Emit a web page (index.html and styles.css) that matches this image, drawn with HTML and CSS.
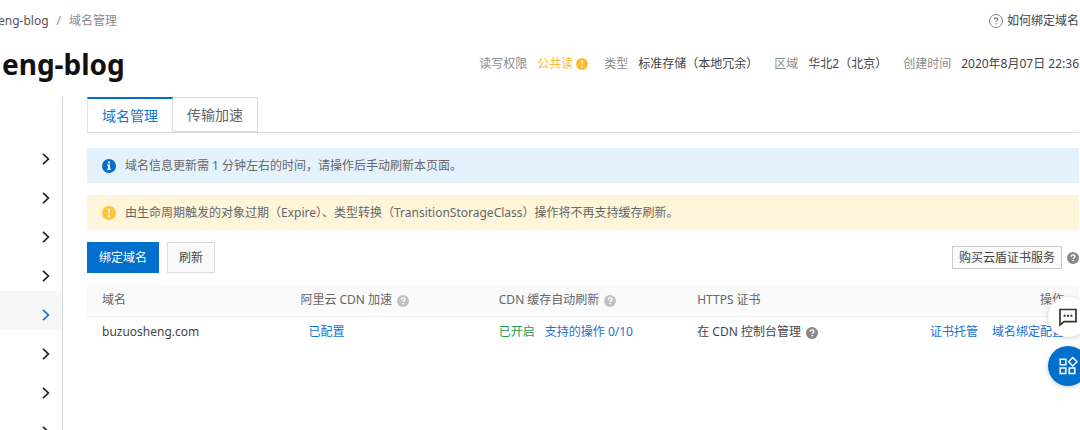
FILE: index.html
```html
<!DOCTYPE html>
<html lang="zh-CN">
<head>
<meta charset="utf-8">
<meta name="viewport" content="width=device-width, initial-scale=1">
<title>域名管理</title>
<link rel="stylesheet" href="styles.css">
</head>
<body>
<svg class="sprite" aria-hidden="true">
  <symbol id="chevron" viewBox="0 0 8 12"><path d="M1 .8 6.4 6 1 11.2" fill="none" stroke="currentColor" stroke-width="1.7"/></symbol>
  <symbol id="help" viewBox="0 0 14 14"><circle cx="7" cy="7" r="7" fill="currentColor"/><path d="M4.9 5.5c0-1.3.9-2.1 2.1-2.1s2.2.8 2.2 1.9c0 1.4-2 1.5-2 3" fill="none" stroke="#fff" stroke-width="1.6"/><path d="M6.3 9.3h1.7v1.6H6.3z" fill="#fff"/></symbol>
  <symbol id="help-line" viewBox="0 0 14 14"><circle cx="7" cy="7" r="6.5" fill="none" stroke="currentColor" stroke-width=".9"/><path d="M5.3 5.6c0-1.1.7-1.7 1.7-1.7s1.8.6 1.8 1.5c0 1.2-1.7 1.3-1.7 2.7" fill="none" stroke="currentColor" stroke-width="1.1"/><path d="M6.5 9.2h1.2v1.2H6.5z" fill="currentColor"/></symbol>
  <symbol id="warn" viewBox="0 0 14 14"><circle cx="7" cy="7" r="7" fill="currentColor"/><path d="M6.1 2.8h1.8l-.3 5.4H6.4zM6.1 9.3h1.8v1.8H6.1z" fill="#fff"/></symbol>
  <symbol id="info" viewBox="0 0 14 14"><circle cx="7" cy="7" r="7" fill="currentColor"/><path d="M6 2.6h2v1.8H6zM5 5.5h3v4.2h1v1.3H5V9.7h1V6.8H5z" fill="#fff"/></symbol>
</svg>

<header class="header">
  <div class="header-row">
    <nav class="breadcrumb" aria-label="breadcrumb">
      <a class="crumb" href="#">eng-blog</a>
      <span class="slash">/</span>
      <span class="crumb-current">域名管理</span>
    </nav>
    <a class="help-link" href="#"><svg class="icon"><use href="#help-line"/></svg>如何绑定域名</a>
  </div>
  <div class="title-row">
    <h1 class="title">eng-blog</h1>
    <dl class="meta">
      <div class="meta-item"><dt>读写权限</dt><dd class="orange">公共读<svg class="icon-small"><use href="#warn"/></svg></dd></div>
      <div class="meta-item"><dt>类型</dt><dd>标准存储（本地冗余）</dd></div>
      <div class="meta-item"><dt>区域</dt><dd>华北2（北京）</dd></div>
      <div class="meta-item"><dt>创建时间</dt><dd>2020年8月07日 22:36</dd></div>
    </dl>
  </div>
</header>

<div class="body">
  <nav class="sidebar" aria-label="menu">
    <a class="side-item" href="#" aria-label="展开"><svg class="chevron"><use href="#chevron"/></svg></a>
    <a class="side-item" href="#" aria-label="展开"><svg class="chevron"><use href="#chevron"/></svg></a>
    <a class="side-item" href="#" aria-label="展开"><svg class="chevron"><use href="#chevron"/></svg></a>
    <a class="side-item" href="#" aria-label="展开"><svg class="chevron"><use href="#chevron"/></svg></a>
    <a class="side-item active" href="#" aria-label="展开"><svg class="chevron"><use href="#chevron"/></svg></a>
    <a class="side-item" href="#" aria-label="展开"><svg class="chevron"><use href="#chevron"/></svg></a>
    <a class="side-item" href="#" aria-label="展开"><svg class="chevron"><use href="#chevron"/></svg></a>
    <a class="side-item" href="#" aria-label="展开"><svg class="chevron"><use href="#chevron"/></svg></a>
  </nav>

  <main class="main">
    <div class="tabs" role="tablist">
      <button class="tab selected" role="tab" aria-selected="true">域名管理</button>
      <button class="tab" role="tab" aria-selected="false">传输加速</button>
    </div>

    <div class="alert alert-info"><svg class="icon"><use href="#info"/></svg><span>域名信息更新需 1 分钟左右的时间，请操作后手动刷新本页面。</span></div>
    <div class="alert alert-warn"><svg class="icon"><use href="#warn"/></svg><span>由生命周期触发的对象过期（Expire）、类型转换（TransitionStorageClass）操作将不再支持缓存刷新。</span></div>

    <div class="toolbar">
      <button class="btn primary">绑定域名</button>
      <button class="btn">刷新</button>
      <div class="toolbar-end">
        <button class="btn compact">购买云盾证书服务</button>
        <svg class="icon-small dark"><use href="#help"/></svg>
      </div>
    </div>

    <table class="table">
      <thead>
        <tr>
          <th>域名</th>
          <th>阿里云 CDN 加速<svg class="icon-small light"><use href="#help"/></svg></th>
          <th>CDN 缓存自动刷新<svg class="icon-small light"><use href="#help"/></svg></th>
          <th>HTTPS 证书</th>
          <th class="end">操作</th>
        </tr>
      </thead>
      <tbody>
        <tr>
          <td>buzuosheng.com</td>
          <td><a class="link indent" href="#">已配置</a></td>
          <td><span class="on">已开启</span><a class="link" href="#">支持的操作 0/10</a></td>
          <td>在 CDN 控制台管理<svg class="icon-small dark"><use href="#help"/></svg></td>
          <td class="end"><a class="link" href="#">证书托管</a><a class="link next" href="#">域名绑定配置</a></td>
        </tr>
      </tbody>
    </table>
  </main>
</div>

<div class="floating">
  <button class="fab" aria-label="反馈">
    <svg viewBox="0 0 20 20" width="20" height="20"><path d="M2 2.5h16v12.2H6.2L2 18z" fill="none" stroke="#333" stroke-width="1.7"/><path d="M5.6 7.8h2v2h-2zM9 7.8h2v2H9zM12.4 7.8h2v2h-2z" fill="#333"/></svg>
  </button>
  <button class="fab blue" aria-label="应用">
    <svg viewBox="0 0 20 20" width="20" height="20"><path d="M2.2 3.2h5.6v5.6H2.2zM2.2 12h5.6v5.4H2.2zM11.2 12h5.6v5.4h-5.6zM14.8 1.5l4.2 4.3-4.2 4.2-4.2-4.2z" fill="none" stroke="#fff" stroke-width="1.5"/></svg>
  </button>
</div>
</body>
</html>
```
FILE: styles.css
```css
* { box-sizing: border-box; }

body {
  margin: 0;
  min-height: 100vh;
  display: flex;
  flex-direction: column;
  overflow: hidden;
  background: #fff;
  color: #444;
  font: 12px/18px "Noto Sans", "Noto Sans CJK SC", sans-serif;
}

a { color: inherit; text-decoration: none; }
button { font: inherit; color: inherit; cursor: pointer; }
.sprite { display: none; }

.icon { width: 14px; height: 14px; flex: none; }
.icon-small { width: 12px; height: 12px; flex: none; margin-left: 5px; vertical-align: -3px; }
.light { color: #c1c1c1; }
.dark { color: #888; }

.header { padding: 12px 1px 0 0; }
.header-row, .title-row { display: flex; justify-content: space-between; align-items: center; }
.breadcrumb { display: flex; gap: 8px; }
.crumb { margin-left: -2px; color: #555; }
.slash, .crumb-current { color: #8c8c8c; }
.help-link { display: flex; align-items: center; gap: 4px; }
.help-link .icon { color: #777; }

.title-row { height: 67px; }
.title { margin: 0 0 0 2px; color: #111; font-size: 28px; line-height: 40px; font-weight: 700; }
.meta { display: flex; gap: 16px; margin: 0; }
.meta-item { display: flex; gap: 10px; }
.meta dt { color: #8c8c8c; }
.meta dd { display: flex; align-items: center; margin: 0; }
.meta .orange { color: #ffb92e; }
.meta .icon-small { margin-left: 3px; }

.body { flex: 1; display: flex; }
.sidebar {
  flex: 0 0 63px;
  height: calc(100vh - 97px);
  padding-top: 38px;
  border-right: 1px solid #d6d6d6;
  overflow: hidden;
}
.side-item { display: flex; justify-content: flex-end; height: 39px; padding: 18px 12px 0 0; color: #222; }
.chevron { width: 8px; height: 12px; }
.side-item.active { background: #f7f7f7; color: #1473d2; }

.main { flex: 1; min-width: 0; padding: 0 1px 0 24px; }

.tabs { display: flex; height: 36px; border-bottom: 1px solid #d9d9d9; }
.tab {
  height: 35px;
  padding: 0 14px;
  border: 1px solid #dcdcdc;
  border-left: 0;
  background: #fff;
  color: #666;
  font-size: 14px;
}
.tab.selected { border-top: 2px solid #0070cc; border-left: 1px solid #e5e5e5; border-bottom: 0; color: #1473d2; }

.alert { display: flex; align-items: center; gap: 9px; min-height: 35px; padding: 5px 15px 4px; color: #666; }
.alert-info { margin-top: 15px; background: #e4f2fe; }
.alert-info .icon { color: #0070cc; }
.alert-warn { margin-top: 12px; background: #fff5da; }
.alert-warn .icon { color: #ffc440; }

.toolbar { display: flex; align-items: center; gap: 8px; margin-top: 12px; }
.btn { height: 31px; padding: 0 11px; border: 1px solid #ddd; background: #fafafa; color: #444; }
.btn.primary { border-color: #0070cc; background: #0070cc; color: #fff; }
.btn.compact { height: 23px; padding: 0 6px; line-height: 16px; border-color: #ccc; }
.toolbar-end { display: flex; align-items: center; margin-left: auto; }

.table { width: 100%; margin-top: 12px; border-collapse: collapse; table-layout: fixed; }
.table th, .table td { height: 31px; padding: 0 15px; text-align: left; font-weight: 400; white-space: nowrap; }
.table th { background: #fafafa; border-bottom: 1px solid #eee; color: #666; }
.table .end { text-align: right; }
.link { color: #1473d2; }
.link.indent { margin-left: 8px; }
.link.next { margin-left: 14px; }
.on { margin-right: 10px; color: #239b4d; }

/* Quick actions hang partly over the right edge of the window. */
.floating { position: fixed; top: 297px; right: -8px; display: flex; flex-direction: column; gap: 9px; }
.fab {
  display: flex;
  align-items: center;
  justify-content: center;
  width: 40px;
  height: 40px;
  padding: 0;
  border: 0;
  border-radius: 50%;
  background: #fff;
  box-shadow: 0 1px 5px rgba(0, 0, 0, .2);
}
.fab.blue { background: #0070cc; }
```
